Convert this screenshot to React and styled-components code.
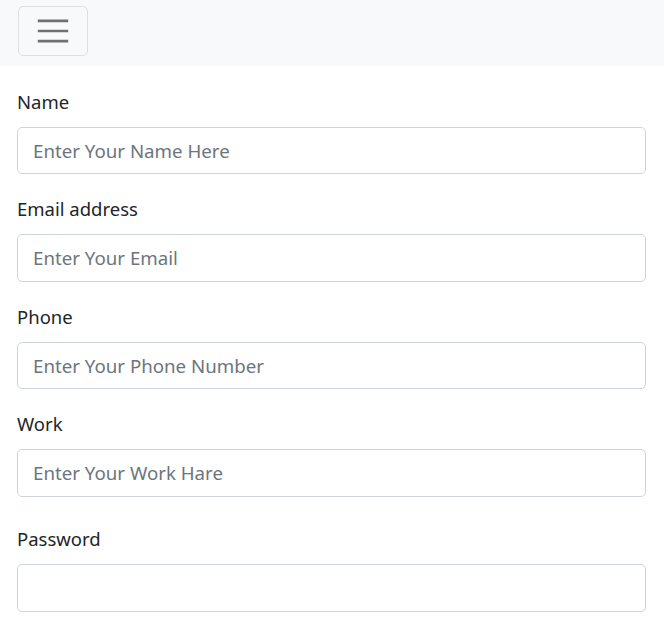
import styled, { createGlobalStyle } from 'styled-components';

const GlobalStyle = createGlobalStyle`
    body{
        margin:0;
        background:#fff;
        font-family:"Noto Sans", "Open Sans", sans-serif;
        color:#212529;
    }
    *{ box-sizing:border-box; }
`

const fields = [
    { id: 'name', label: 'Name', type: 'text', placeholder: 'Enter Your Name Here' },
    { id: 'email', label: 'Email address', type: 'email', placeholder: 'Enter Your Email' },
    { id: 'phone', label: 'Phone', type: 'text', placeholder: 'Enter Your Phone Number' },
    { id: 'work', label: 'Work', type: 'text', placeholder: 'Enter Your Work Hare' },
    { id: 'password', label: 'Password', type: 'password', placeholder: '', spaced: true },
]

function App(){
    return(
        <>
            <GlobalStyle />
            <Navbar>
                <Toggler type="button" aria-label="Toggle navigation">
                    <svg width="38" height="38" viewBox="0 0 30 30">
                        <path d="M3 7h24M3 15h24M3 23h24" stroke="rgba(0,0,0,0.55)" strokeWidth="2" />
                    </svg>
                </Toggler>
            </Navbar>
            <Form>
                {fields.map(f => (
                    <Group key={f.id} $spaced={f.spaced}>
                        <Label htmlFor={f.id}>{f.label}</Label>
                        <Input id={f.id} type={f.type} placeholder={f.placeholder} />
                    </Group>
                ))}
            </Form>
        </>
    )
}

export default App

const Navbar = styled.nav`
    background:#f8f9fa;
    height:66px;
    padding:6px 18px 10px;
    display:flex;
    align-items:flex-start;
`
const Toggler = styled.button`
    width:70px;
    height:50px;
    border:1px solid rgba(0,0,0,0.1);
    border-radius:5px;
    background:transparent;
    display:flex;
    align-items:center;
    justify-content:center;
    padding:0;
    cursor:pointer;
`
const Form = styled.form`
    padding:20.5px 18px 0 17px;
`
const Group = styled.div`
    margin-bottom:20px;
    margin-top:${props => props.$spaced ? '27.5px' : '0'};
`
const Label = styled.label`
    display:block;
    font-size:18.5px;
    line-height:30px;
    margin-bottom:10px;
    color:#212529;
`
const Input = styled.input`
    display:block;
    width:100%;
    height:47.5px;
    padding:7px 15px;
    font-family:inherit;
    font-size:18.7px;
    color:#495057;
    background:#fff;
    border:1px solid #ced4da;
    border-radius:5px;
    outline:none;
    &::placeholder{
        color:#6c757d;
        opacity:1;
    }
`
